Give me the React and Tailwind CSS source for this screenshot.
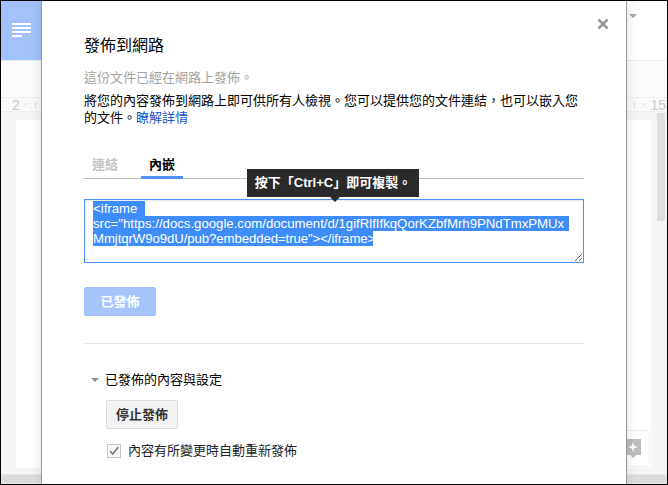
import React from "react";

const cjk = "font-['Liberation_Sans','Noto_Sans_CJK_TC',sans-serif]";

function Background() {
    return (
        <div className="flex h-full flex-col">
            <div className="flex h-[60px] shrink-0 border-b border-[#ebebeb] bg-white">
                <div className="flex w-[40px] flex-col gap-[2px] bg-[#a1c2fa] pl-[11px] pt-[22px]">
                    <div className="h-[2px] w-[19px] bg-white" />
                    <div className="h-[2px] w-[19px] bg-white" />
                    <div className="h-[2px] w-[19px] bg-white" />
                    <div className="h-[2px] w-[10px] bg-white" />
                </div>
                <div className="flex flex-1 justify-end pr-[30px] pt-[13px]">
                    <div className="h-0 w-0 border-x-[4px] border-t-[4px] border-x-transparent border-t-[#a8a8a8]" />
                </div>
            </div>
            <div className="h-[36px] shrink-0 bg-[#fbfbfb]" />
            <div className="flex h-[15px] shrink-0 items-center justify-between border-y border-[#efefef] bg-[#fafafa] pl-[11px] pr-[1px] text-[14px] leading-none text-[#c9c9c9]">
                <div className="flex items-center">
                    <span>2</span>
                    <span className="ml-[5px] h-[3px] w-px bg-[#dcdcdc]" />
                    <span className="ml-[9px] h-[6px] w-px bg-[#dcdcdc]" />
                </div>
                <div className="flex items-center">
                    <span className="mr-[9px] h-[6px] w-px bg-[#dcdcdc]" />
                    <span className="mr-[5px] h-[3px] w-px bg-[#dcdcdc]" />
                    <span>15</span>
                </div>
            </div>
            <div className="flex min-h-0 flex-1 bg-[#f5f5f5]">
                <div className="flex-1 pb-[6px] pl-[15px] pt-[8px]">
                    <div className="h-full bg-white" />
                </div>
                <div className="ml-[6px] mr-[2px] mt-px h-[108px] w-[8px] bg-[#dedede]" />
            </div>
            <div className="h-[10px] shrink-0 border border-[#e6e6e6] bg-[#dcdcdc]" />
        </div>
    );
}

function PublishDialog() {
    return (
        <div className={`absolute bottom-0 left-[40px] top-0 w-[586px] border-x border-[#999] bg-white pl-[42px] pr-[42px] text-black shadow-[0_0_12px_rgba(0,0,0,0.12)] ${cjk}`}>
            <svg className="absolute right-[17px] top-[17px]" width="12" height="12" viewBox="0 0 12 12">
                <path d="M1.500 1.500l9 9M10.500 1.500l-9 9" stroke="#9a9a9a" strokeWidth="2.600" />
            </svg>
            <h2 className="pt-[35px] text-[16px] font-normal leading-[20px]">發佈到網路</h2>
            <p className="mt-[13px] text-[13px] leading-[18px] text-[#a3a3a3]">這份文件已經在網路上發佈。</p>
            <p className="mt-[5px] text-[13px] leading-[17px]">
                將您的內容發佈到網路上即可供所有人檢視。您可以提供您的文件連結&#xFF0C;也可以嵌入您的文件。
                <a className="text-[#1155cc]">瞭解詳情</a>
            </p>

            <div className="mt-[24px] flex h-[29px] border-b border-[#bdbdbd] pl-[8px] text-[13px] font-bold leading-[18px]">
                <span className="w-[57px] pt-[6px] text-[#c4c4c4]">連結</span>
                <span className="-ml-[8px] h-[29px] w-[42px] border-b-[3px] border-[#4d90fe] pt-[6px] text-center">內嵌</span>
            </div>

            <div className="relative">
                <div className="absolute -top-[10px] left-[163px] flex h-[28px] w-[172px] items-center justify-center bg-[#2a2a2a] text-[13px] font-bold text-white">
                    按下「Ctrl+C」即可複製。
                    <div className="absolute -bottom-[5px] left-[83px] h-0 w-0 border-x-[5px] border-t-[5px] border-x-transparent border-t-[#2a2a2a]" />
                </div>
            </div>

            <div className="mt-[20px] h-[64px] w-[500px] resize overflow-auto border border-[#4d90fe] pl-[8px] pt-[1px] font-['Liberation_Sans',sans-serif] text-[13.2px] leading-[15px] text-white shadow-[inset_0_1px_2px_rgba(0,0,0,0.1)]">
                <div className="w-[52px] bg-[#3f8cfb]">&lt;iframe</div>
                <div className="w-[476px] whitespace-nowrap bg-[#3f8cfb]">src="https://docs.google.com/document/d/1gifRlfIfkqQorKZbfMrh9PNdTmxPMUx</div>
                <div className="w-[280px] whitespace-nowrap bg-[#3f8cfb] tracking-[-0.08px]">MmjtqrW9o9dU/pub?embedded=true"&gt;&lt;/iframe&gt;</div>
            </div>

            <button className="mt-[24px] block h-[29px] w-[72px] rounded-[2px] border border-[#9dbcf5] bg-[#a6c5fd] text-[13px] font-bold text-white">已發佈</button>

            <div className="mt-[27px] border-t border-[#e5e5e5]" />

            <div className="mt-[27px] flex h-[18px] items-center text-[13px]">
                <div className="ml-[7px] mr-[6px] h-0 w-0 border-x-[4px] border-t-[4px] border-x-transparent border-t-[#8c8c8c]" />
                已發佈的內容與設定
            </div>
            <button className="ml-[22px] mt-[11px] block h-[29px] w-[72px] rounded-[2px] border border-[#dcdcdc] bg-[#f3f3f3] text-[13px] font-bold text-[#333]">停止發佈</button>
            <div className="ml-[23px] mt-[15px] flex items-center text-[13px] leading-[14px] text-[#222]">
                <div className="mr-[7px] flex h-[14px] w-[14px] items-center justify-center border border-[#c6c6c6] bg-[#f8f8f8]">
                    <svg width="14" height="12" viewBox="0 0 14 12">
                        <path d="M2.500 6l3 3.500 6.500-8" fill="none" stroke="#7f7f7f" strokeWidth="2" />
                    </svg>
                </div>
                內容有所變更時自動重新發佈
            </div>
        </div>
    );
}

export default function App() {
    return (
        <div className="relative h-[485px] w-[668px] overflow-hidden border border-black font-['Liberation_Sans',sans-serif]">
            <Background />

            {/* chat button peeks out behind the dialog */}
            <div className="absolute bottom-[17px] left-[600px] flex h-[37px] w-[49px] items-center justify-end rounded-[3px] border border-[#eeeeee] bg-white pr-[8px]">
                <svg width="16" height="20" viewBox="0 0 16 20">
                    <path d="M0 0h16v16h-5l-3 3-3-3H0z" fill="#bdbdbd" />
                    <path d="M8 3l1.300 3.700L13 8l-3.700 1.300L8 13l-1.300-3.700L3 8l3.700-1.300z" fill="#fff" />
                </svg>
            </div>

            <PublishDialog />
        </div>
    );
}
